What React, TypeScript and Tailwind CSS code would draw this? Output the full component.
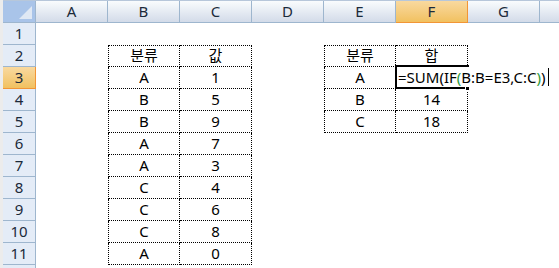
import React from 'react';

const cols = ['A', 'B', 'C', 'D', 'E', 'F', 'G', 'H'];

// sheet data: row -> col -> value
const data: Record<number, Record<string, string>> = {
    2: { B: '분류', C: '값', E: '분류', F: '합' },
    3: { B: 'A', C: '1', E: 'A' },
    4: { B: 'B', C: '5', E: 'B', F: '14' },
    5: { B: 'B', C: '9', E: 'C', F: '18' },
    6: { B: 'A', C: '7' },
    7: { B: 'A', C: '3' },
    8: { B: 'C', C: '4' },
    9: { B: 'C', C: '6' },
    10: { B: 'C', C: '8' },
    11: { B: 'A', C: '0' },
};

function inTable(row: number, col: string) {
    if ((col === 'B' || col === 'C') && row >= 2 && row <= 11) return true;
    if ((col === 'E' || col === 'F') && row >= 2 && row <= 5) return true;
    return false;
}

function Cell({ row, col }: { row: number; col: string }) {
    const boxed = inTable(row, col);
    const leftEdge = boxed && (col === 'B' || col === 'E');
    const topEdge = boxed && row === 2;
    const value = data[row]?.[col] ?? '';
    const active = row === 3 && col === 'F';
    return (
        <div
            className={
                'relative box-border h-[22px] w-[72px] shrink-0 ' +
                (boxed ? 'border-r border-b border-dotted border-black ' : '') +
                (leftEdge ? 'border-l ' : '') +
                (topEdge ? 'border-t ' : '') +
                'flex items-center justify-center text-[15px] leading-none text-black'
            }
        >
            {!active && value && <span className="-mt-[1px]">{value}</span>}
            {active && (
                <div className="absolute -left-[1px] -top-[2px] z-10 flex h-[24px] w-[156px] items-center bg-white">
                    <div className="absolute left-0 top-0 h-[2px] w-[74px] bg-black" />
                    <div className="absolute bottom-0 left-0 h-[2px] w-[74px] bg-black" />
                    <div className="absolute left-0 top-0 h-full w-[2px] bg-black" />
                    <div className="absolute -bottom-[2px] left-[70px] h-[5px] w-[5px] border border-white bg-black" />
                    <span className="ml-[3px] whitespace-nowrap text-[15px] leading-none text-black">
                        =SUM(IF<span className="text-[#2a9a3a]">(</span>B:B=E3,C:C<span className="text-[#2a9a3a]">)</span>)
                    </span>
                    <span className="ml-[2px] h-[18px] w-[1px] bg-black" />
                </div>
            )}
        </div>
    );
}

export default function App() {
    const rows = Array.from({ length: 12 }, (_, i) => i + 1);
    return (
        <div
            className="h-[268px] w-[559px] overflow-hidden bg-white"
            style={{ fontFamily: '"Noto Sans", "Noto Sans CJK KR", sans-serif' }}
        >
            <div className="flex h-full">
                <div className="w-[3px] shrink-0 bg-[#ececec]" />
                <div className="flex shrink-0 flex-col">
                    <div className="h-[3px] border-t border-[#b7c7da] bg-[#f2f4f7]" />
                    {/* column headers */}
                    <div className="flex h-[22px] shrink-0">
                        <div className="relative box-border h-[22px] w-[33px] shrink-0 border-r border-b border-[#9eb6ce] bg-[#a9c4e9]">
                            <div
                                className="absolute bottom-[3px] right-[3px] h-0 w-0 border-b-[13px] border-l-[13px] border-b-[#dfe8f4] border-l-transparent"
                            />
                        </div>
                        {cols.map((c) => (
                            <div
                                key={c}
                                className={
                                    'box-border flex h-[22px] w-[72px] shrink-0 items-center justify-center border-r border-b text-[15px] leading-none text-[#1b2a3a] ' +
                                    (c === 'F'
                                        ? 'border-[#f29536] bg-gradient-to-b from-[#f9d99f] to-[#f1c15f]'
                                        : 'border-[#9eb6ce] bg-gradient-to-b from-[#f9fcfd] to-[#d3dbe9]')
                                }
                            >
                                {c !== 'H' && <span className="-mt-[1px]">{c}</span>}
                            </div>
                        ))}
                    </div>
                    {rows.map((r) => (
                        <div key={r} className="flex h-[22px] shrink-0">
                            <div
                                className={
                                    'box-border flex h-[22px] w-[33px] shrink-0 items-center justify-center border-r border-b text-[15px] leading-none text-[#1b2a3a] ' +
                                    (r === 3
                                        ? 'border-b-[#f29536] border-r-[#f29536] bg-gradient-to-b from-[#f9d99f] to-[#f1c15f]'
                                        : 'border-[#9eb6ce] bg-[#e4ecf7]')
                                }
                            >
                                {r < 12 && <span className="-mt-[1px]">{r}</span>}
                            </div>
                            {cols.map((c) => (
                                <Cell key={c} row={r} col={c} />
                            ))}
                        </div>
                    ))}
                </div>
            </div>
        </div>
    );
}
